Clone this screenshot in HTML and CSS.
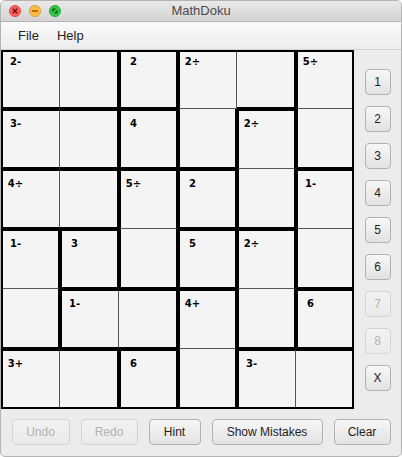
FILE: index.html
```html
<!DOCTYPE html>
<html>
<head>
<meta charset="utf-8">
<title>MathDoku</title>
<link rel="stylesheet" href="styles.css">
</head>
<body>
<div class="window">
  <div class="titlebar">
    <div class="lights">
      <svg class="light" viewBox="0 0 12 12" width="12" height="12"><circle cx="6" cy="6" r="5.5" fill="#fc605c" stroke="#de4a45" stroke-width="1"/><path d="M3.8 3.8 L8.2 8.2 M8.2 3.8 L3.8 8.2" stroke="#6e0b08" stroke-width="1.5"/></svg>
      <svg class="light" viewBox="0 0 12 12" width="12" height="12"><circle cx="6" cy="6" r="5.5" fill="#fdbc40" stroke="#de9f34" stroke-width="1"/><path d="M3 6 H9" stroke="#8f5a00" stroke-width="1.6"/></svg>
      <svg class="light" viewBox="0 0 12 12" width="12" height="12"><circle cx="6" cy="6" r="5.5" fill="#34c84a" stroke="#27aa35" stroke-width="1"/><path d="M3.4 3.4 H7.2 L3.4 7.2 Z M8.6 8.6 H4.8 L8.6 4.8 Z" fill="#0b5e14"/></svg>
    </div>
    <div class="title">MathDoku</div>
    <div></div>
  </div>
  <div class="menubar">
    <span class="menu">File</span>
    <span class="menu">Help</span>
  </div>
  <div class="main">
    <div class="grid">
      <div class="cell b"><span class="lbl">2-</span></div>
      <div class="cell r b"></div>
      <div class="cell l r b"><span class="lbl">2</span></div>
      <div class="cell l"><span class="lbl">2÷</span></div>
      <div class="cell r b"></div>
      <div class="cell l"><span class="lbl">5÷</span></div>

      <div class="cell t b"><span class="lbl">3-</span></div>
      <div class="cell t r b"></div>
      <div class="cell t l r b"><span class="lbl">4</span></div>
      <div class="cell l r b"></div>
      <div class="cell t l r"><span class="lbl">2÷</span></div>
      <div class="cell l b"></div>

      <div class="cell t b"><span class="lbl">4÷</span></div>
      <div class="cell t r b"></div>
      <div class="cell t l r"><span class="lbl">5÷</span></div>
      <div class="cell t l r b"><span class="lbl">2</span></div>
      <div class="cell l r b"></div>
      <div class="cell t l"><span class="lbl">1-</span></div>

      <div class="cell t r"><span class="lbl">1-</span></div>
      <div class="cell t l r b"><span class="lbl">3</span></div>
      <div class="cell l r b"></div>
      <div class="cell t l r b"><span class="lbl">5</span></div>
      <div class="cell t l r"><span class="lbl">2÷</span></div>
      <div class="cell l b"></div>

      <div class="cell r b"></div>
      <div class="cell t l b"><span class="lbl">1-</span></div>
      <div class="cell t r b"></div>
      <div class="cell t l r"><span class="lbl">4+</span></div>
      <div class="cell l r b"></div>
      <div class="cell t l b"><span class="lbl">6</span></div>

      <div class="cell t"><span class="lbl">3+</span></div>
      <div class="cell t r"></div>
      <div class="cell t l r"><span class="lbl">6</span></div>
      <div class="cell l r"></div>
      <div class="cell t l"><span class="lbl">3-</span></div>
      <div class="cell t"></div>
    </div>
    <div class="numbers">
      <button class="btn num">1</button>
      <button class="btn num">2</button>
      <button class="btn num">3</button>
      <button class="btn num">4</button>
      <button class="btn num">5</button>
      <button class="btn num">6</button>
      <button class="btn num" disabled>7</button>
      <button class="btn num" disabled>8</button>
      <button class="btn num">X</button>
    </div>
  </div>
  <div class="actions">
    <button class="btn w-undo" disabled>Undo</button>
    <button class="btn w-redo" disabled>Redo</button>
    <button class="btn w-hint">Hint</button>
    <button class="btn w-mistakes">Show Mistakes</button>
    <button class="btn w-clear">Clear</button>
  </div>
</div>
</body>
</html>
```
FILE: styles.css
```css
* { box-sizing: border-box; }

html, body {
  margin: 0;
  padding: 0;
  background: #ffffff;
}

.window {
  width: 402px;
  height: 457px;
  border: 1px solid #b4b4b4;
  border-radius: 5px;
  overflow: hidden;
  background: #ececec;
  display: flex;
  flex-direction: column;
  font-family: "Liberation Sans", Arial, sans-serif;
}

.titlebar {
  height: 21px;
  flex: none;
  display: grid;
  grid-template-columns: 1fr auto 1fr;
  align-items: center;
  background: linear-gradient(#e9e9e9, #d3d3d3);
  border-bottom: 1px solid #b3b3b3;
}

.lights {
  display: flex;
  gap: 8px;
  padding-left: 8px;
}

.light { display: block; }

.title {
  font-size: 13px;
  line-height: 20px;
  color: #4a4a4a;
}

.menubar {
  height: 28px;
  flex: none;
  display: flex;
  align-items: center;
  gap: 18px;
  padding-left: 17px;
  background: linear-gradient(#fafafa, #ececec);
  border-bottom: 1px solid #d2d2d2;
}

.menu {
  font-size: 13px;
  color: #222;
}

.main {
  display: flex;
  flex: none;
}

.grid {
  flex: none;
  width: 353px;
  height: 359px;
  border: 2px solid #000;
  display: grid;
  grid-template-columns: 57px 59px 59px 59px 59px 56px;
  grid-template-rows: 57px 60px 60px 60px 60px 58px;
}

.cell {
  background: #f4f4f4;
  border-right: 1px solid #555;
  border-bottom: 1px solid #555;
  padding: 9px 0 0 2px;
}

.cell:nth-child(6n) { border-right: 0; }
.cell:nth-child(n+31) { border-bottom: 0; }
.cell:nth-child(6n+1) { padding-left: 0; }
.cell:nth-child(-n+6) { padding-top: 4px; }

.cell.r { border-right: 2px solid #000; }
.cell.b { border-bottom: 2px solid #000; }
.cell.l { border-left: 2px solid #000; padding-left: 0; }
.cell.t { border-top: 2px solid #000; padding-top: 7px; }

.lbl {
  display: block;
  width: 25px;
  text-align: center;
  font: bold 10px/12px "DejaVu Sans", Verdana, sans-serif;
  color: #000;
}

.numbers {
  flex: 1;
  display: flex;
  flex-direction: column;
  align-items: center;
  justify-content: center;
  gap: 11px;
}

.btn {
  font-family: "Liberation Sans", Arial, sans-serif;
  font-size: 12px;
  color: #1e1e1e;
  height: 26px;
  padding: 0;
  border: 1px solid #b2b2b2;
  border-radius: 4px;
  background: linear-gradient(#f7f7f7, #e2e2e2);
}

.btn:disabled {
  color: #b2b2b2;
  border-color: #d4d4d4;
  background: linear-gradient(#f2f2f2, #eaeaea);
}

.num { width: 26px; }

.actions {
  flex: 1;
  display: flex;
  justify-content: center;
  align-items: center;
  gap: 11px;
  padding-bottom: 1px;
}

.w-undo { width: 58px; }
.w-redo { width: 57px; }
.w-hint { width: 52px; }
.w-mistakes { width: 111px; }
.w-clear { width: 57px; }
```
